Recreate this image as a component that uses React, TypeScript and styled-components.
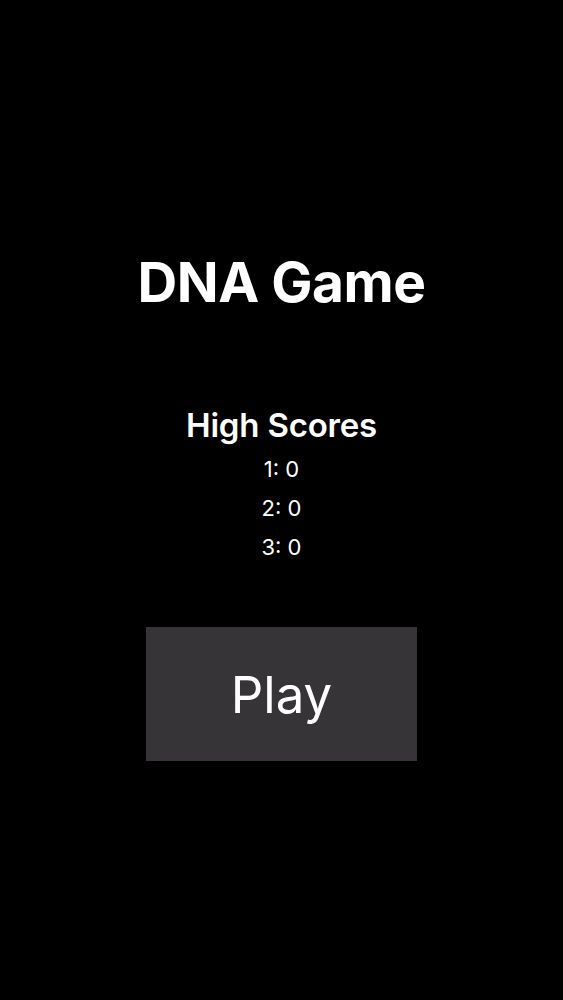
import React from "react";
import styled, { createGlobalStyle } from "styled-components";

const Global = createGlobalStyle`
  html, body { margin: 0; padding: 0; background: #000; }
  body { font-family: Inter, "Noto Sans", sans-serif; color: #fff; }
`;

const Screen = styled.div`
  width: 563px;
  height: 1000px;
  background: #000;
  display: flex;
  flex-direction: column;
  align-items: center;
  box-sizing: border-box;
  padding-top: 248px;
`;

const Title = styled.h1`
  margin: 0;
  font-size: 55px;
  font-weight: 700;
  line-height: 68px;
  letter-spacing: -0.5px;
`;

const Scores = styled.section`
  margin-top: 89px;
  display: flex;
  flex-direction: column;
  align-items: center;
`;

const ScoresHeading = styled.h2`
  margin: 0;
  font-size: 33px;
  font-weight: 600;
  line-height: 40px;
  letter-spacing: -0.2px;
`;

const ScoreList = styled.div`
  margin-top: 5px;
  display: flex;
  flex-direction: column;
  align-items: center;
`;

const ScoreRow = styled.div`
  font-size: 22px;
  font-weight: 400;
  line-height: 39px;
`;

const PlayButton = styled.button`
  margin-top: 60px;
  width: 271px;
  height: 134px;
  background: #363437;
  border: none;
  border-radius: 0;
  color: #fff;
  font-family: Inter, "Noto Sans", sans-serif;
  font-size: 51px;
  font-weight: 400;
  display: flex;
  align-items: center;
  justify-content: center;
  padding: 0;
`;

const scores = [0, 0, 0];

export default function App() {
  return (
    <>
      <Global />
      <Screen>
        <Title>DNA Game</Title>
        <Scores>
          <ScoresHeading>High Scores</ScoresHeading>
          <ScoreList>
            {scores.map((s, i) => (
              <ScoreRow key={i}>
                {i + 1}: {s}
              </ScoreRow>
            ))}
          </ScoreList>
        </Scores>
        <PlayButton>Play</PlayButton>
      </Screen>
    </>
  );
}
